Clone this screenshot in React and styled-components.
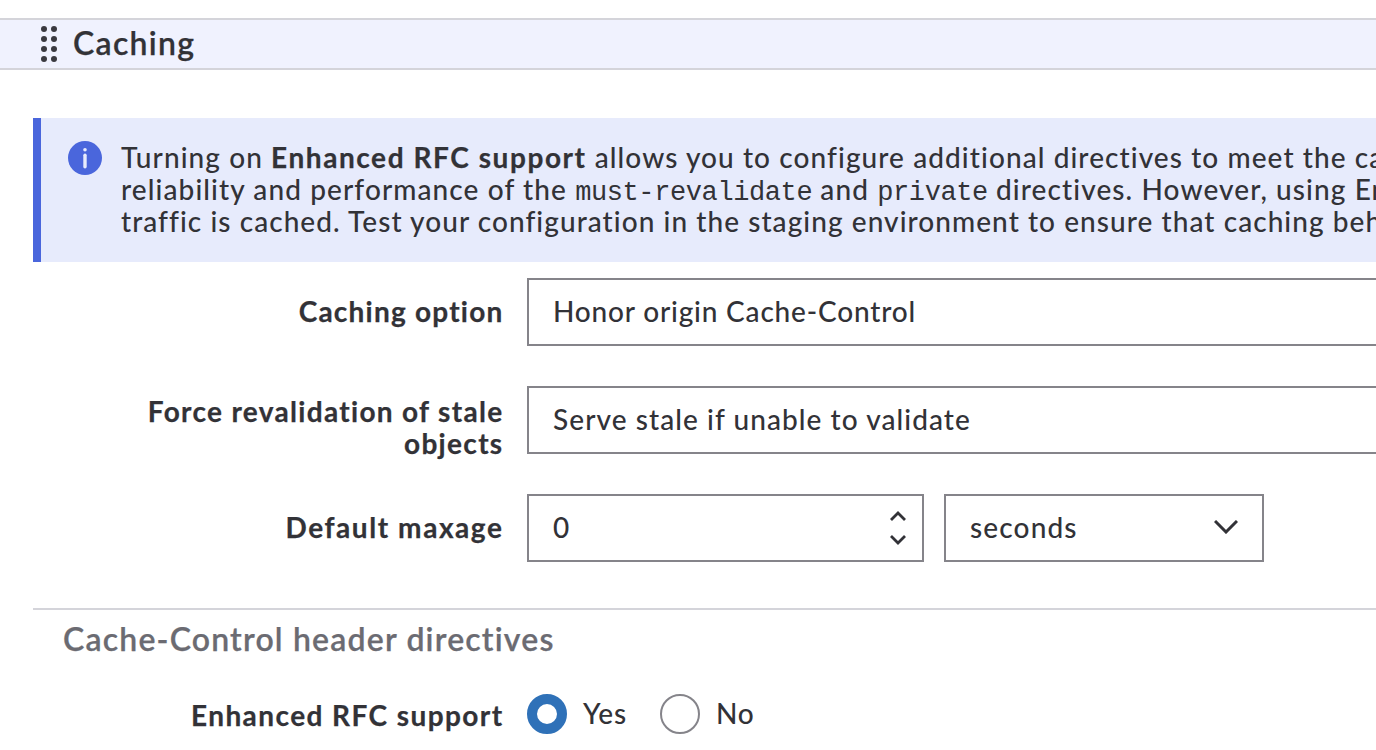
import React from "react";
import styled, { createGlobalStyle } from "styled-components";

const GlobalStyle = createGlobalStyle`
  *, *::before, *::after { box-sizing: border-box; }
  html, body { margin: 0; background: #fff; overflow: hidden; }
  body {
    color: #323237;
    font-family: Lato, "Noto Sans", sans-serif;
    font-size: 28px;
    font-weight: 500;
    line-height: 32px;
    font-variant-ligatures: none;
  }
`;

const Page = styled.main`
  display: flex;
  flex-direction: column;
  width: 1376px;
  height: 750px;
  padding-top: 18px;
  overflow: hidden;
`;

const SectionHeader = styled.header`
  flex: none;
  display: flex;
  align-items: center;
  height: 52px;
  padding-left: 41px;
  background: #f0f2fe;
  border-top: 2px solid #d4d4da;
  border-bottom: 2px solid #d4d4da;
`;

const Title = styled.h2`
  margin: 0 0 2px 14px;
  font-size: 32px;
  font-weight: 600;
  line-height: 40px;
  letter-spacing: 1.3px;
  -webkit-text-stroke: 0.25px currentColor;
`;

const Alert = styled.section`
  flex: none;
  display: flex;
  align-items: flex-start;
  height: 144px;
  margin: 48px 0 0 33px;
  padding: 23px 0 0 27px;
  border-left: 8px solid #4a66dc;
  background: #e7ebfc;
  overflow: hidden;
`;

const AlertText = styled.div`
  flex: 1;
  min-width: 0;
  margin: 0 0 0 19px;
`;

const Line = styled.div`
  height: 32px;
  white-space: pre;
  letter-spacing: ${(p) => p.$spacing}px;
`;

const Strong = styled.strong`
  font-weight: 700;
  letter-spacing: 1.57px;
  -webkit-text-stroke: 0.25px currentColor;
`;

const Code = styled.code`
  font-family: "Liberation Mono", monospace;
  font-size: 27px;
  font-weight: 400;
  line-height: 24px;
  letter-spacing: -0.4px;
`;

const Form = styled.div`
  flex: none;
  display: grid;
  row-gap: 40px;
  margin-top: 16px;
`;

const Row = styled.div`
  display: grid;
  grid-template-columns: 503px 1fr;
  column-gap: 24px;
  height: ${(p) => p.$height || 68}px;
`;

const Label = styled.div`
  padding-top: ${(p) => p.$top}px;
  margin-right: -0.5px;
  text-align: right;
  font-weight: 700;
  white-space: pre;
  letter-spacing: ${(p) => p.$spacing}px;
  -webkit-text-stroke: 0.25px currentColor;
`;

const Controls = styled.div`
  display: flex;
  align-items: flex-start;
  gap: 20px;
  min-width: 0;
`;

const Field = styled.div`
  flex: none;
  display: flex;
  align-items: center;
  justify-content: space-between;
  width: ${(p) => p.$width}px;
  height: 68px;
  padding: 0 ${(p) => p.$right || 24}px 2px 24px;
  border: 2px solid #85848a;
  background: #fff;
  white-space: nowrap;
  letter-spacing: ${(p) => p.$spacing || 0}px;
`;

const Steppers = styled.span`
  display: flex;
  flex-direction: column;
  gap: 14px;
  margin-top: 2px;
`;

const Divider = styled.hr`
  flex: none;
  width: 1343px;
  height: 2px;
  margin: 46px 0 0 33px;
  border: 0;
  background: #d4d4da;
`;

const Subheading = styled.h3`
  flex: none;
  margin: 9px 0 0 63px;
  color: #6b6b72;
  font-size: 32px;
  font-weight: 600;
  line-height: 40px;
  letter-spacing: 1.18px;
  -webkit-text-stroke: 0.25px currentColor;
`;

const RadioRow = styled(Row)`
  flex: none;
  margin-top: 35px;
`;

const Radio = styled.span`
  flex: none;
  width: 40px;
  height: 40px;
  border: ${(p) => (p.$checked ? "10px solid #2f71b8" : "2px solid #85848a")};
  border-radius: 50%;
  background: #fff;
`;

const Option = styled.label`
  display: flex;
  align-items: flex-start;
  gap: 16px;
  width: ${(p) => p.$width}px;
  letter-spacing: 0.8px;
`;

const OptionText = styled.span`
  padding-top: 3px;
`;

const DragHandle = () => (
  <svg width="18" height="38" viewBox="0 0 18 38" fill="#3a3a40">
    {[4, 14, 24, 34].map((y) => (
      <React.Fragment key={y}>
        <circle cx="3" cy={y} r="3" />
        <circle cx="13" cy={y} r="3" />
      </React.Fragment>
    ))}
  </svg>
);

const InfoIcon = () => (
  <svg width="34" height="34" viewBox="0 0 34 34">
    <circle cx="17" cy="17" r="17" fill="#4a66dc" />
    <circle cx="17" cy="8.7" r="1.8" fill="#e7ebfc" />
    <path d="M17 14.3v11.4" stroke="#e7ebfc" strokeWidth="3.4" strokeLinecap="round" />
  </svg>
);

const Chevron = ({ width, height, up, stroke }) => (
  <svg
    width={width}
    height={height}
    viewBox={`0 0 ${width} ${height}`}
    fill="none"
    stroke="#323237"
    strokeWidth={stroke}
  >
    <path
      d={
        up
          ? `M1 ${height - 1}L${width / 2} 2L${width - 1} ${height - 1}`
          : `M1 1L${width / 2} ${height - 2}L${width - 1} 1`
      }
    />
  </svg>
);

export default function App() {
  return (
    <>
      <GlobalStyle />
      <Page>
        <SectionHeader>
          <DragHandle />
          <Title>Caching</Title>
        </SectionHeader>

        <Alert>
          <InfoIcon />
          <AlertText>
            <Line $spacing={1.08}>
              Turning on <Strong>Enhanced RFC support</Strong> allows you to configure additional directives to meet the ca
            </Line>
            <Line $spacing={1.1}>
              reliability and performance of the <Code>must-revalidate</Code> and <Code>private</Code> directives. However, using En
            </Line>
            <Line $spacing={1.06}>
              traffic is cached. Test your configuration in the staging environment to ensure that caching beh
            </Line>
          </AlertText>
        </Alert>

        <Form>
          <Row>
            <Label $top={17} $spacing={1.22}>Caching option</Label>
            <Controls>
              <Field $width={900} $spacing={0.82}>Honor origin Cache-Control</Field>
            </Controls>
          </Row>
          <Row>
            <Label $top={9} $spacing={1.32}>{"Force revalidation of stale\nobjects"}</Label>
            <Controls>
              <Field $width={900} $spacing={1.07}>Serve stale if unable to validate</Field>
            </Controls>
          </Row>
          <Row>
            <Label $top={17} $spacing={1.57}>Default maxage</Label>
            <Controls>
              <Field $width={397} $right={16}>
                0
                <Steppers>
                  <Chevron width={16} height={10} stroke={2.8} up />
                  <Chevron width={16} height={10} stroke={2.8} />
                </Steppers>
              </Field>
              <Field $width={320} $spacing={1.15}>
                seconds
                <Chevron width={24} height={14} stroke={3} />
              </Field>
            </Controls>
          </Row>
        </Form>

        <Divider />
        <Subheading>Cache-Control header directives</Subheading>

        <RadioRow $height={40}>
          <Label $top={5} $spacing={1.42}>Enhanced RFC support</Label>
          <Controls>
            <Option $width={113}>
              <Radio $checked />
              <OptionText>Yes</OptionText>
            </Option>
            <Option $width={110}>
              <Radio />
              <OptionText>No</OptionText>
            </Option>
          </Controls>
        </RadioRow>
      </Page>
    </>
  );
}
